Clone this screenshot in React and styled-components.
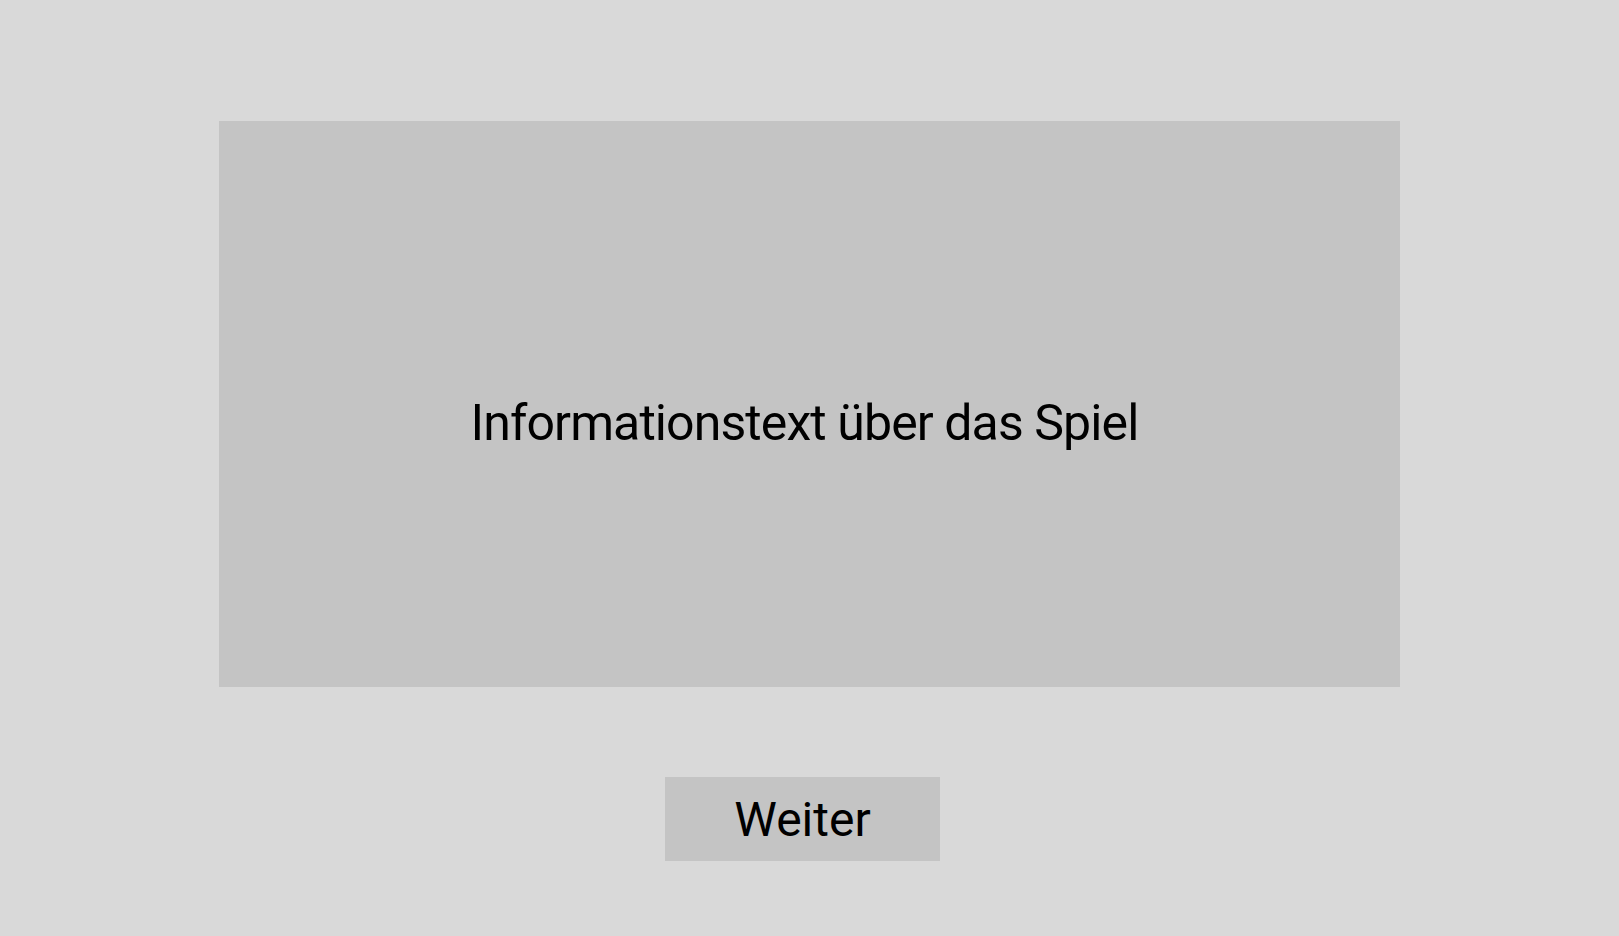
import React from "react";
import styled, { createGlobalStyle } from "styled-components";

const GlobalStyle = createGlobalStyle`
  html, body {
    margin: 0;
    padding: 0;
    background: #d9d9d9;
    font-family: Roboto, "Liberation Sans", sans-serif;
  }
`;

export default function App() {
  return (
    <>
      <GlobalStyle />
      <Page>
        <InfoPanel>
          <InfoText>Informationstext über das Spiel</InfoText>
        </InfoPanel>
        <NextButton>Weiter</NextButton>
      </Page>
    </>
  );
}

const Page = styled.div`
  width: 1619px;
  height: 936px;
  background: #d9d9d9;
  display: flex;
  flex-direction: column;
  align-items: flex-start;
  overflow: hidden;
`;

const InfoPanel = styled.div`
  margin: 121px 0 0 219px;
  width: 1181px;
  height: 566px;
  box-sizing: border-box;
  padding: 38px 10px 0 0;
  background: #c4c4c4;
  display: flex;
  align-items: center;
  justify-content: center;
`;

const InfoText = styled.p`
  margin: 0;
  font-size: 50px;
  font-weight: 400;
  letter-spacing: -0.9px;
  color: #000;
  line-height: 1;
`;

const NextButton = styled.button`
  margin: 90px 0 0 665px;
  width: 275px;
  height: 84px;
  padding: 0;
  border: none;
  background: #c4c4c4;
  color: #000;
  font-family: Roboto, "Liberation Sans", sans-serif;
  font-size: 48px;
  cursor: pointer;
`;
